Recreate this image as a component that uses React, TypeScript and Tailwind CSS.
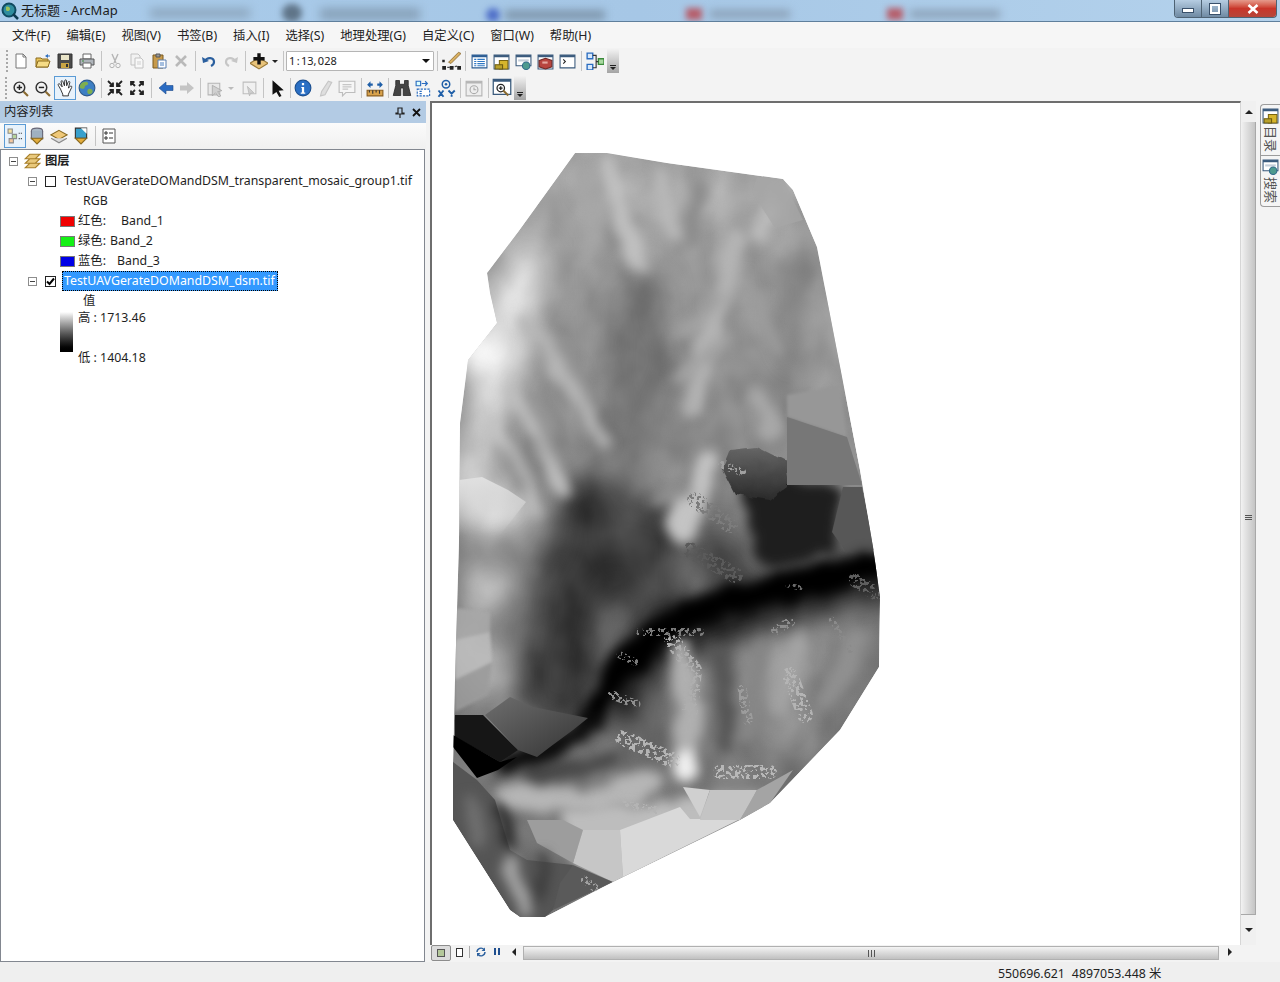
import React from 'react'

const I = ({ children, s = 16 }: { children: React.ReactNode; s?: number }) => (
  <svg width={s} height={s} viewBox="0 0 16 16" fill="none">{children}</svg>
)

const icons: Record<string, React.ReactNode> = {
  newDoc: <I><path d="M3 1h7l3 3v11H3z" fill="#fff" stroke="#777" /><path d="M10 1v3h3" stroke="#777" /></I>,
  open: <I><path d="M1 5h5l1 1h6v8H1z" fill="#e8c45a" stroke="#8a6a1e" /><path d="M1 14l2-6h12l-2 6z" fill="#f6dc86" stroke="#8a6a1e" /><path d="M10 3l3-2v1.5h2v1h-2V5z" fill="#2f6fc0" /></I>,
  save: <I><path d="M1 1h14v14H1z" fill="#4b4b4b" stroke="#333" /><path d="M4 2h8v5H4z" fill="#e9e4c8" /><path d="M4 10h8v5H4z" fill="#c9a545" /><path d="M9 11h2v3H9z" fill="#333" /></I>,
  print: <I><path d="M4 1h8v5H4z" fill="#fff" stroke="#666" /><path d="M1 6h14v6H1z" fill="#aeb4ba" stroke="#555" /><path d="M4 10h8v5H4z" fill="#fff" stroke="#666" /><path d="M3 8h2" stroke="#3a8a3a" /></I>,
  cut: <I><path d="M5 1l4 9M11 1L7 10" stroke="#b4b4b4" strokeWidth="1.4" /><circle cx="5" cy="12.5" r="2.2" stroke="#b4b4b4" /><circle cx="11" cy="12.5" r="2.2" stroke="#b4b4b4" /></I>,
  copy: <I><path d="M2 1h7l2 2v9H2z" fill="#f2f2f2" stroke="#c2c2c2" /><path d="M6 5h6l2 2v8H6z" fill="#f8f8f8" stroke="#c2c2c2" /><path d="M8 9h4M8 11h4" stroke="#cfcfcf" /></I>,
  paste: <I><path d="M2 2h10v13H2z" fill="#c79a4b" stroke="#7b5a20" /><path d="M5 1h4v3H5z" fill="#999" stroke="#555" /><path d="M7 7h8v8H7z" fill="#fff" stroke="#5a7fb0" /><path d="M9 10h4M9 12h4" stroke="#4a7fc0" /></I>,
  del: <I><path d="M3 3l10 10M13 3L3 13" stroke="#b9b9b9" strokeWidth="2.6" /></I>,
  undo: <I><path d="M4 8c2-4 9-4 9 1 0 2-1 3-3 4" stroke="#2a5f9e" strokeWidth="2.2" /><path d="M1 4l1 6 6-2z" fill="#2a5f9e" /></I>,
  redo: <I><path d="M12 8c-2-4-9-4-9 1 0 2 1 3 3 4" stroke="#c6c6c6" strokeWidth="2.2" /><path d="M15 4l-1 6-6-2z" fill="#c6c6c6" /></I>,
  add: <I s={18}><path d="M8 5l8 5-8 5-8-5z" fill="#e8c37a" stroke="#9a7a3a" /><path d="M6.5 1h3v3.5H13v3H9.500v3.500h-3v-3.500H3v-3h3.500z" fill="#111" /></I>,
  editor: <I s={20}><path d="M2 13l6 0 6-1" stroke="#444" strokeDasharray="2 1" /><path d="M1 12h3v3H1zM7 12h3v3H7zM13 12h3v3h-3zM1 7h2v2H1z" fill="#222" /><path d="M6 9l8-8 2 1-8 8z" fill="#d9b061" stroke="#80602a" strokeWidth=".6" /></I>,
  toc: <I s={17}><path d="M1 2h14v12H1z" fill="#fff" stroke="#2b5c93" /><path d="M1 2h14v2H1z" fill="#2b5c93" /><path d="M3 6h2M6 6h7M3 8h2M6 8h7M3 10h2M6 10h7M3 12h2M6 12h7" stroke="#2f78c4" /></I>,
  catalog: <I s={17}><path d="M1 2h14v13H1z" fill="#fff" stroke="#3a5a7c" /><path d="M1 2h14v2H1z" fill="#3a5a7c" /><path d="M6 7h8v8H6z" fill="#d6b52c" stroke="#7a6510" /><path d="M2 11h7v4H2z" fill="#b9a12a" stroke="#6d5c10" /></I>,
  searchWin: <I s={17}><path d="M1 2h14v10H1z" fill="#fff" stroke="#3a5a7c" /><path d="M1 2h14v2H1z" fill="#3a5a7c" /><path d="M3 6h10v2H3z" fill="#c4ced9" /><circle cx="10.500" cy="12" r="3.500" fill="#4d9a8e" stroke="#2f6a8a" /></I>,
  toolbox: <I s={17}><path d="M1 2h14v13H1z" fill="#fff" stroke="#3a5a7c" /><path d="M1 2h14v2H1z" fill="#3a5a7c" /><path d="M2 7l6-2 6 2v6l-6 2-6-2z" fill="#b8443f" stroke="#702724" /><path d="M5 8h5v2H5z" fill="#e6a7a0" /></I>,
  python: <I s={17}><path d="M1 2h14v12H1z" fill="#fff" stroke="#3a5a7c" /><path d="M1 2h14v2H1z" fill="#3a5a7c" /><path d="M4 6l2 2-2 2" stroke="#222" /></I>,
  model: <I s={18}><path d="M1 1h5v5H1zM1 11h5v5H1z" fill="#d8e8fa" stroke="#2a6cc0" strokeWidth="1.200" /><path d="M11 6h5v5h-5z" fill="#a9d8a0" stroke="#3a8a3a" strokeWidth="1.200" /><path d="M6 3h3v11H6M9 8.500h2" stroke="#333" /></I>,
  zoomIn: <I s={17}><circle cx="7" cy="7" r="5" fill="#f2f2f2" stroke="#333" strokeWidth="1.400" /><path d="M4.500 7h5M7 4.500v5" stroke="#222" strokeWidth="1.400" /><path d="M11 11l4 4" stroke="#8a6a30" strokeWidth="2" /></I>,
  zoomOut: <I s={17}><circle cx="7" cy="7" r="5" fill="#f2f2f2" stroke="#333" strokeWidth="1.400" /><path d="M4.500 7h5" stroke="#222" strokeWidth="1.400" /><path d="M11 11l4 4" stroke="#8a6a30" strokeWidth="2" /></I>,
  hand: <I s={18}><path d="M4 9L2 5.500c-.6-1 .8-1.800 1.500-.9L5.500 7 4.500 2.500c-.2-1.100 1.300-1.400 1.600-.3L7.500 6l.3-4.500c.1-1.100 1.500-1 1.500.1L9.500 6l1.300-3.300c.4-1 1.800-.5 1.500.5L11 8l1.800-1.500c.8-.6 1.700.3 1.100 1.100L11 13.500V15H6v-1.500z" fill="#fff" stroke="#222" strokeWidth=".8" /></I>,
  globe: <I s={18}><circle cx="8" cy="8" r="7" fill="#3d7fc4" stroke="#2d5a8c" /><path d="M4 3c2-1 5-1 5 1s-3 1-3 3-3 2-4 1 0-4 2-5zM9 9c2-1 4 0 4 2s-3 3-4 2 -1-3 0-4z" fill="#7fae4e" /></I>,
  zoomFixIn: <I><path d="M1 1l5 5M6 2.500V6H2.500M15 1l-5 5M10 2.500V6h3.500M1 15l5-5M6 13.500V10H2.500M15 15l-5-5M10 13.500V10h3.500" stroke="#222" strokeWidth="1.800" /></I>,
  zoomFixOut: <I><path d="M6 6L2 2M2 5.500V2h3.500M10 6l4-4M14 5.500V2h-3.500M6 10l-4 4M2 10.500V14h3.500M10 10l4 4M14 10.500V14h-3.500" stroke="#222" strokeWidth="1.800" /></I>,
  back: <I><path d="M1 8l7-6v3.500h7v5H8V14z" fill="#2a6bc2" stroke="#1c4a8a" strokeWidth=".6" /></I>,
  forward: <I><path d="M15 8L8 2v3.500H1v5h7V14z" fill="#c4c4c4" /></I>,
  selectF: <I s={17}><path d="M1 3h11v11H1z" fill="#e8e8e8" stroke="#b5b5b5" /><path d="M5 5l9 5-4 1 3 4-2 1-3-4-3 3z" fill="#d0d0d0" stroke="#a5a5a5" strokeWidth=".7" /></I>,
  clear: <I s={17}><path d="M2 2h12v11H2z" fill="#f0f0f0" stroke="#bdbdbd" /><path d="M6 6l6 6-3 .5-1 2.500z" fill="#cfcfcf" stroke="#b0b0b0" strokeWidth=".6" /></I>,
  pointer: <I s={18}><path d="M4 1l10 9-4.500.5L12 15l-2 1-2.500-4.500L4 14z" fill="#111" /></I>,
  info: <I s={18}><circle cx="8" cy="8" r="7" fill="#2a6fc4" stroke="#1b4f90" /><path d="M7 3.500h2v2H7zM6.500 7H9v5h1v1H6v-1h1V8h-.5z" fill="#fff" /></I>,
  link: <I s={18}><path d="M11 2l3 1-6 11-4 1 1-4z" fill="#dedede" stroke="#c6c6c6" /></I>,
  note: <I s={18}><path d="M1 2h14v10H7l-3 3v-3H1z" fill="#f6f6f6" stroke="#bdbdbd" /><path d="M4 5h8M4 7h8M4 9h5" stroke="#c6c6c6" /></I>,
  measure: <I s={18}><path d="M1 5l3-3v2h2v2H4v2zM15 5l-3-3v2h-2v2h2v2z" fill="#1f5fa8" /><path d="M1 10h14v5H1z" fill="#d9a24b" stroke="#8a5f20" /><path d="M3 10v2M6 10v3M9 10v2M12 10v3" stroke="#333" /></I>,
  binoc: <I s={20}><path d="M3 2h3v3h4V2h3v4l2 8h-6V8H7v6H1l2-8z" fill="#444" stroke="#222" strokeWidth=".6" /></I>,
  goto: <I s={18}><path d="M2 9h11v6H2z" fill="#fff" stroke="#2a6cc0" strokeDasharray="2 1" /><path d="M1 2h4v4H1z" fill="#dff" stroke="#2a6cc0" /><path d="M6 4h5M9 2l2 2-2 2" stroke="#2a6cc0" /><path d="M4 11h2M4 13h2" stroke="#2a6cc0" /></I>,
  xy: <I s={20}><circle cx="8" cy="5" r="3" stroke="#1f5fa8" strokeWidth="1.200" /><circle cx="8" cy="5" r="1" fill="#1f5fa8" /><path d="M2 10l4 5M6 10l-4 5M10 10l2.500 2.500L15 10M12.500 12.500V15" stroke="#1f5fa8" strokeWidth="1.500" /></I>,
  time: <I s={18}><path d="M1 2h14v13H1z" fill="#eee" stroke="#b5b5b5" /><path d="M1 2h14v2H1z" fill="#b5b5b5" /><circle cx="8" cy="9.500" r="3.500" stroke="#aaa" /><path d="M8 7.500v2h2" stroke="#aaa" /></I>,
  magnify: <I s={20}><path d="M1 1h14v12H1z" fill="#fff" stroke="#3a5a7c" /><path d="M1 1h14v2H1z" fill="#3a5a7c" /><circle cx="7" cy="8" r="3" stroke="#222" /><path d="M5.500 8h3M7 6.500v3" stroke="#222" /><path d="M9 10l4 4" stroke="#8a6a30" strokeWidth="1.600" /></I>,
  listDraw: <I s={17}><path d="M1 1h4v4H1z" fill="#f4e2a0" stroke="#8a8a8a" /><path d="M5 6h4v4H5z" fill="#b7d59c" stroke="#8a8a8a" /><path d="M2 10h4v4H2z" fill="#f4c8a0" stroke="#8a8a8a" /><path d="M11 5h3M11 10h3" stroke="#333" strokeDasharray="1 1" /></I>,
  listSource: <I s={18}><ellipse cx="8" cy="3.500" rx="5" ry="2.500" fill="#aab8c6" stroke="#667" /><path d="M3 3.500v7h10v-7" fill="#9fb0c0" stroke="#667" /><path d="M3 10h10L8 15z" fill="#e3ad3d" stroke="#8a6a20" /></I>,
  listVis: <I s={18}><path d="M8 3l7 4-7 4-7-4z" fill="#efc878" stroke="#8a6a20" /><path d="M1 10l7 4 7-4" stroke="#8a8a8a" fill="#ddd" /></I>,
  listSel: <I s={18}><path d="M3 1h10v9H3z" fill="#38a0cc" stroke="#333" /><path d="M8 1h5v5z" fill="#fff" /><path d="M3 10h10l-5 5z" fill="#e3ad3d" stroke="#8a6a20" /></I>,
  opts: <I><path d="M2 1h12v14H2z" fill="#fff" stroke="#555" /><path d="M4 4h2v2H4zM4 9h2v2H4z" stroke="#333" /><path d="M8 5h4M8 10h4" stroke="#333" /></I>,
  layers: <I s={18}><path d="M6 2h9l-4 4H2zM6 6h9l-4 4H2zM6 10h9l-4 4H2z" fill="#e9c97c" stroke="#a87f2a" /></I>,
}

const Slot = ({ name, w = 22, active }: { name: string; w?: number; active?: boolean }) => (
  <div className={`h-[24px] shrink-0 flex items-center justify-center ${active ? 'bg-[#e8f2fb] border border-[#5b9bd5]' : ''}`} style={{ width: w }}>
    {icons[name]}
  </div>
)

const Sep = ({ w = 6 }: { w?: number }) => (
  <div className="h-[20px] shrink-0 flex justify-center" style={{ width: w }}>
    <div className="w-px h-full bg-[#c4c4c4]" />
  </div>
)

const Caret = ({ w = 10, light }: { w?: number; light?: boolean }) => (
  <div className="h-[24px] shrink-0 flex items-center justify-center" style={{ width: w }}>
    <div className={`w-0 h-0 border-x-[3px] border-x-transparent border-t-[3px] ${light ? 'border-t-[#bbb]' : 'border-t-[#222]'}`} />
  </div>
)

const Grip = () => (
  <div className="w-[6px] shrink-0 flex flex-col gap-[2px] items-center">
    {[0, 1, 2, 3, 4, 5].map((i) => <div key={i} className="w-[2px] h-[2px] bg-[#a8a8a8]" />)}
  </div>
)

const Overflow = () => (
  <div className="w-[12px] h-[24px] ml-[1px] mt-[1px] self-start shrink-0 bg-gradient-to-b from-[#f2f2f2] to-[#a4a4a4] flex flex-col items-center justify-end pb-[3px] gap-[1px]">
    <div className="w-[6px] h-px bg-[#222]" />
    <div className="w-0 h-0 border-x-[3px] border-x-transparent border-t-[3px] border-t-[#222]" />
  </div>
)

const Expander = () => (
  <div className="w-[9px] h-[9px] shrink-0 border border-[#8d8d8d] bg-white flex items-center justify-center">
    <div className="w-[5px] h-px bg-[#444]" />
  </div>
)

const Check = ({ on }: { on?: boolean }) => (
  <div className="w-[11px] h-[11px] shrink-0 border border-[#222] bg-white flex items-center justify-center">
    {on && <svg width="9" height="9" viewBox="0 0 9 9"><path d="M1 4.500l2.500 2.500L8 1.500" stroke="#000" strokeWidth="2" fill="none" /></svg>}
  </div>
)

const BandRow = ({ color, label, gap, band }: { color: string; label: string; gap: string; band: string }) => (
  <div className="h-[20px] flex items-center pl-[59px]">
    <div className="w-[15px] h-[11px] border border-[#777]" style={{ background: color }} />
    <span className="ml-[3px]">{label}</span>
    <span className={gap}>{band}</span>
  </div>
)

const outline =
  '575,153 607,153 667,163 783,179 793,190 817,247 860,470 873,547 880,597 879,667 840,730 770,803 740,820 613,882 545,917 520,917 510,910 453,820 453,763 455,680 459,540 460,423 468,360 497,323 490,293 487,273 518,232'

const stroke = (d: string, c: string, w: number) => (
  <path key={d} d={d} stroke={c} strokeWidth={w} fill="none" strokeLinecap="round" strokeLinejoin="round" />
)

const RasterMap = () => (
  <svg className="block w-full h-full" viewBox="432 104 808 840">
    <defs>
      <clipPath id="dem"><polygon points={outline} /></clipPath>
      <linearGradient id="base" x1="0" y1="0" x2="0" y2="1">
        <stop offset="0" stopColor="#a8a8a8" />
        <stop offset=".4" stopColor="#888888" />
        <stop offset="1" stopColor="#707070" />
      </linearGradient>
      <linearGradient id="cap" x1="0" y1="0" x2="0" y2="1">
        <stop offset="0" stopColor="#666666" />
        <stop offset="1" stopColor="#2a2a2a" />
      </linearGradient>
      <linearGradient id="fade" x1="0" y1="0" x2="0" y2="1">
        <stop offset="0" stopColor="#e0e0e0" />
        <stop offset="1" stopColor="#e0e0e0" stopOpacity="0" />
      </linearGradient>
      <linearGradient id="wedge" x1="0" y1="0" x2="1" y2="1">
        <stop offset="0" stopColor="#6e6e6e" />
        <stop offset="1" stopColor="#333333" />
      </linearGradient>
      <filter id="wide" x="-20%" y="-20%" width="140%" height="140%" colorInterpolationFilters="sRGB">
        <feTurbulence type="fractalNoise" baseFrequency=".018" numOctaves="3" seed="7" result="n" />
        <feDisplacementMap in="SourceGraphic" in2="n" scale="34" xChannelSelector="R" yChannelSelector="G" />
        <feGaussianBlur stdDeviation="13" />
      </filter>
      <filter id="ridge" x="-20%" y="-20%" width="140%" height="140%" colorInterpolationFilters="sRGB">
        <feTurbulence type="fractalNoise" baseFrequency=".03" numOctaves="3" seed="11" result="n" />
        <feDisplacementMap in="SourceGraphic" in2="n" scale="20" xChannelSelector="R" yChannelSelector="G" />
        <feGaussianBlur stdDeviation="6" />
      </filter>
      <filter id="soft" x="-10%" y="-10%" width="120%" height="120%"><feGaussianBlur stdDeviation="1.500" /></filter>
      <filter id="mottle" x="0" y="0" width="100%" height="100%" colorInterpolationFilters="sRGB">
        <feTurbulence type="fractalNoise" baseFrequency=".03 .02" numOctaves="4" seed="9" />
        <feColorMatrix type="matrix" values="1.800 0 0 0 -.400  1.800 0 0 0 -.400  1.800 0 0 0 -.400  0 0 0 0 .1" />
        <feGaussianBlur stdDeviation="3" />
      </filter>
      <filter id="rough" x="-10%" y="-10%" width="120%" height="120%" colorInterpolationFilters="sRGB">
        <feTurbulence type="fractalNoise" baseFrequency=".09" numOctaves="2" seed="3" result="n" />
        <feDisplacementMap in="SourceGraphic" in2="n" scale="6" xChannelSelector="R" yChannelSelector="G" />
      </filter>
      <filter id="speck" x="-5%" y="-5%" width="110%" height="110%" colorInterpolationFilters="sRGB">
        <feTurbulence type="fractalNoise" baseFrequency=".28" numOctaves="2" seed="5" result="n" />
        <feColorMatrix in="n" type="matrix" values="0 0 0 0 0  0 0 0 0 0  0 0 0 0 0  24 0 0 0 -12.500" result="m" />
        <feComposite in="SourceGraphic" in2="m" operator="in" />
      </filter>
    </defs>
    <g clipPath="url(#dem)">
      <polygon points={outline} fill="url(#base)" />

      {/* broad relief */}
      <g filter="url(#wide)">
        {stroke('M600 180 L650 200 L760 210', '#b4b4b4', 40)}
        {stroke('M530 260 L510 320 L490 400', '#e2e2e2', 50)}
        {stroke('M465 350 L495 345', '#ffffff', 44)}
        {stroke('M480 440 L470 490', '#cdcdcd', 44)}
        {stroke('M475 520 L505 510', '#dcdcdc', 46)}
        {stroke('M478 590 L495 585', '#bcbcbc', 50)}
        {stroke('M470 650 L490 670', '#b4b4b4', 50)}
        {stroke('M640 300 L640 400 L615 470', '#747474', 62)}
        {stroke('M800 260 L800 340', '#868686', 28)}
        {stroke('M835 300 L840 380', '#a6a6a6', 30)}
        {stroke('M790 650 L780 720', '#989898', 60)}
        {stroke('M640 700 L650 750', '#606060', 46)}
        {stroke('M590 510 L575 600 L555 690', '#2e2e2e', 70)}
        {stroke('M640 530 L650 590', '#3c3c3c', 70)}
        {stroke('M710 555 L740 565', '#3c3c3c', 46)}
        {stroke('M880 570 L800 595 L730 610 L655 640 L620 690', '#161616', 50)}
      </g>

      <rect x="440" y="140" width="450" height="790" filter="url(#mottle)" />

      {/* fine ridges and gullies */}
      <g filter="url(#ridge)">
        {stroke('M610 165 L622 210 L640 262', '#c0c0c0', 18)}
        {stroke('M582 180 L592 240', '#a6a6a6', 16)}
        {stroke('M660 175 L672 230', '#b8b8b8', 16)}
        {stroke('M700 190 L690 235', '#8a8a8a', 18)}
        {stroke('M736 238 L728 275 L712 330 L692 410', '#b4b4b4', 20)}
        {stroke('M770 210 L758 235', '#bcbcbc', 18)}
        {stroke('M720 300 L680 335', '#a4a4a4', 10)}
        {stroke('M725 340 L680 380', '#a4a4a4', 10)}
        {stroke('M760 300 L775 350', '#9c9c9c', 14)}
        {stroke('M755 395 L770 430', '#a8a8a8', 22)}
        {stroke('M528 325 L572 385 L600 440', '#b6b6b6', 16)}
        {stroke('M510 392 L545 442 L565 488', '#bebebe', 16)}
        {stroke('M490 420 L515 468 L535 510', '#c4c4c4', 14)}
        {stroke('M560 345 L590 402', '#929292', 9)}
        {stroke('M530 400 L556 450', '#949494', 9)}
        {stroke('M500 450 L522 490', '#a2a2a2', 8)}
        {stroke('M708 465 L682 530', '#c4c4c4', 26)}
        {stroke('M650 500 L690 490', '#9a9a9a', 8)}
        {stroke('M682 650 L690 720 L686 770', '#b0b0b0', 24)}
        {stroke('M688 762 L686 772', '#f0f0f0', 22)}
        {stroke('M722 652 L726 745', '#545454', 16)}
        {stroke('M760 650 L745 730', '#868686', 22)}
        {stroke('M860 640 L825 700', '#909090', 20)}
        {stroke('M800 640 L780 710', '#a4a4a4', 16)}
        {stroke('M530 775 L610 760', '#484848', 18)}
        {stroke('M510 797 L600 802 L650 782', '#b6b6b6', 28)}
      </g>

      {/* dark basin and its sharp shoulder */}
      <polygon points="735,480 787,475 845,490 835,550 770,572 745,530" fill="#1e1e1e" filter="url(#ridge)" />
      <polygon points="722,470 730,450 757,447 787,462 787,487 770,500 735,495" fill="url(#cap)" filter="url(#rough)" />
      <polygon points="757,177 783,179 803,220 775,228 752,192" fill="#a6a6a6" opacity=".7" />
      <polygon points="787,395 840,385 847,437 787,417" fill="#979797" filter="url(#soft)" />
      <polygon points="787,417 847,437 862,485 787,485" fill="#777777" />
      <polygon points="843,487 862,487 875,550 846,552 832,532" fill="#575757" />

      {/* river */}
      <g filter="url(#ridge)">
        {stroke('M882 562 L800 585 L730 600 L655 632 L612 682 L592 720', '#000000', 28)}
        {stroke('M592 722 L545 752 L505 765', '#0d0d0d', 20)}
      </g>

      {/* flat facets */}
      <polygon points="560,812 760,790 770,803 740,820 613,882 573,865" fill="#bdbdbd" filter="url(#ridge)" />
      <polygon points="620,830 680,807 690,819 740,819 623,877" fill="#d9d9d9" />
      <polygon points="573,863 583,830 620,830 623,877 613,882" fill="#c6c6c6" />
      <polygon points="527,820 563,820 583,830 573,863 537,843" fill="#9d9d9d" />
      <polygon points="683,787 700,817 710,790" fill="#d0d0d0" />
      <polygon points="710,790 757,790 740,820 700,820" fill="#c4c4c4" />
      <polygon points="757,790 793,770 770,803 740,820" fill="#a4a4a4" />
      <polygon points="453,762 477,780 495,800 510,850 527,860 573,865 553,910 545,917 520,917 510,910 453,820" fill="#555555" />
      <polygon points="455,715 483,715 518,750 500,762 455,737" fill="#161616" />
      <polygon points="453,735 500,762 517,757 498,770 477,778 453,747" fill="#000000" />
      <polygon points="485,715 510,697 533,707 588,718 573,730 550,747 537,757 518,750" fill="url(#wedge)" />
      <polygon points="573,865 613,882 553,910 560,883" fill="#5a5a5a" />
      <g filter="url(#ridge)">
        {stroke('M497 807 L512 842', '#242424', 12)}
        {stroke('M510 865 L525 910', '#a4a4a4', 16)}
        {stroke('M470 800 L480 840', '#707070', 14)}
        {stroke('M545 860 L540 900', '#3e3e3e', 12)}
      </g>
      <polygon points="458,480 482,477 508,490 526,502 500,535 458,535" fill="url(#fade)" />
      <g filter="url(#soft)" opacity=".85">
        <polygon points="455,608 490,612 490,632 455,640" fill="#a8a8a8" />
        <polygon points="455,640 490,632 492,662 455,680" fill="#bcbcbc" />
        <polygon points="455,680 492,662 488,695 455,712" fill="#9c9c9c" />
      </g>

      {/* rough noisy patches */}
      <g filter="url(#speck)">
        {stroke('M623 738 L672 760', '#b4b4b4', 16)}
        {stroke('M672 640 L694 670 L690 710', '#aeaeae', 16)}
        {stroke('M790 675 L805 715', '#b4b4b4', 16)}
        {stroke('M720 772 L770 772', '#b8b8b8', 14)}
        {stroke('M640 632 L700 632', '#7c7c7c', 8)}
        {stroke('M776 630 L790 622', '#8c8c8c', 10)}
        {stroke('M855 580 L878 595', '#5e5e5e', 14)}
        {stroke('M625 805 L655 810', '#b4b4b4', 8)}
        {stroke('M612 695 L636 704', '#8e8e8e', 9)}
        {stroke('M620 655 L635 662', '#7a7a7a', 7)}
        {stroke('M788 585 L800 588', '#6a6a6a', 5)}
        {stroke('M690 550 L735 575', '#5a5a5a', 16)}
        {stroke('M722 465 L742 472', '#a0a0a0', 8)}
        {stroke('M695 500 L730 525', '#7c7c7c', 16)}
        {stroke('M585 880 L595 888', '#a0a0a0', 8)}
        {stroke('M742 690 L748 720', '#9c9c9c', 10)}
        {stroke('M832 620 L850 650', '#8a8a8a', 6)}
      </g>
    </g>
  </svg>
)

const Toolbar1 = () => (
  <div className="h-[26px] flex items-center pl-[4px]">
    <Grip />
    <Slot name="newDoc" /><Slot name="open" /><Slot name="save" /><Slot name="print" />
    <Sep />
    <Slot name="cut" /><Slot name="copy" /><Slot name="paste" /><Slot name="del" />
    <Sep />
    <Slot name="undo" /><Slot name="redo" />
    <Sep />
    <Slot name="add" /><Caret />
    <Sep />
    <div className="w-[148px] h-[20px] shrink-0 bg-white border border-[#b5b5b5] rounded-[1px] flex items-center pl-[2px] pr-[3px] text-[11px] justify-between">
      <span className="[word-spacing:-1.5px]">1 : 13, 028</span>
      <div className="w-0 h-0 border-x-[4px] border-x-transparent border-t-[4px] border-t-[#111]" />
    </div>
    <Sep />
    <Slot name="editor" />
    <Sep />
    <Slot name="toc" /><Slot name="catalog" /><Slot name="searchWin" /><Slot name="toolbox" /><Slot name="python" />
    <Sep />
    <Slot name="model" />
    <Overflow />
  </div>
)

const Toolbar2 = () => (
  <div className="h-[26px] mt-px flex items-center pl-[3px]">
    <Grip />
    <Slot name="zoomIn" /><Slot name="zoomOut" />
    <div className="w-px shrink-0" />
    <Slot name="hand" active /><Slot name="globe" />
    <Sep />
    <Slot name="zoomFixIn" /><Slot name="zoomFixOut" />
    <Sep w={7} />
    <Slot name="back" /><Slot name="forward" w={20} />
    <Sep w={7} />
    <Slot name="selectF" /><Caret light /><div className="w-[2px] shrink-0" /><Slot name="clear" />
    <Sep />
    <Slot name="pointer" />
    <Sep w={4} />
    <Slot name="info" /><Slot name="link" /><Slot name="note" />
    <Sep />
    <Slot name="measure" />
    <Sep w={5} />
    <Slot name="binoc" /><Slot name="goto" /><Slot name="xy" />
    <Sep />
    <Slot name="time" />
    <Sep />
    <Slot name="magnify" />
    <Overflow />
  </div>
)

const menus = ['文件(F)', '编辑(E)', '视图(V)', '书签(B)', '插入(I)', '选择(S)', '地理处理(G)', '自定义(C)', '窗口(W)', '帮助(H)']

export default function App() {
  return (
    <div className="w-[1280px] h-[982px] overflow-hidden flex flex-col bg-[#f3f3f3] text-[#222] text-[12.35px] font-['Noto_Sans','Noto_Sans_CJK_SC',sans-serif]">
      {/* title bar */}
      <div className="relative h-[22px] shrink-0 bg-gradient-to-r from-[#a9cbea] via-[#a6c7e6] to-[#b4d2ec] border-b border-[#5f7f9c] flex items-center overflow-hidden">
        <div className="absolute left-[150px] top-[8px] w-[100px] h-[10px] bg-[#8ea8c0] blur-[5px]" />
        <div className="absolute left-[282px] top-[4px] w-[20px] h-[18px] rounded-full bg-[#5f7488] blur-[3px]" />
        <div className="absolute left-[320px] top-[8px] w-[100px] h-[12px] bg-[#88a2ba] blur-[5px]" />
        <div className="absolute left-[486px] top-[8px] w-[14px] h-[14px] rounded-full bg-[#4f6fc8] blur-[3px]" />
        <div className="absolute left-[505px] top-[10px] w-[100px] h-[10px] bg-[#7f97ad] blur-[4px]" />
        <div className="absolute left-[686px] top-[8px] w-[16px] h-[12px] bg-[#b65d6a] blur-[3px]" />
        <div className="absolute left-[710px] top-[10px] w-[80px] h-[8px] bg-[#8aa0b6] blur-[4px]" />
        <div className="absolute left-[887px] top-[8px] w-[16px] h-[12px] bg-[#b65d6a] blur-[3px]" />
        <div className="absolute left-[910px] top-[10px] w-[90px] h-[8px] bg-[#8aa0b6] blur-[4px]" />
        <div className="relative ml-[1px] w-[18px] h-[18px] shrink-0">
          <svg width="18" height="18" viewBox="0 0 18 18">
            <circle cx="8" cy="8" r="6.500" fill="#2f8d9e" stroke="#0f4a60" strokeWidth="2" />
            <path d="M5 5c2-1 4 0 4 2s-3 3-4 1z" fill="#9ac25a" />
            <path d="M12 12l5 5" stroke="#0f3b50" strokeWidth="2.500" />
          </svg>
        </div>
        <span className="relative ml-[2px] text-[13px] text-[#1c1c1c]">无标题 - ArcMap</span>
        <div className="relative ml-auto mr-[3px] self-start h-[18px] flex border border-t-0 border-[#4e6273] rounded-b-[4px] overflow-hidden">
          <div className="w-[27px] bg-gradient-to-b from-[#b6cde2] to-[#6f8aa3] flex items-center justify-center border-r border-[#4e6273]">
            <div className="w-[12px] h-[5px] bg-white border border-[#39506a] mt-[3px]" />
          </div>
          <div className="w-[27px] bg-gradient-to-b from-[#b6cde2] to-[#6f8aa3] flex items-center justify-center border-r border-[#4e6273]">
            <div className="w-[10px] h-[10px] bg-transparent border-2 border-white outline outline-1 outline-[#39506a]" />
          </div>
          <div className="w-[47px] bg-gradient-to-b from-[#e59a8c] via-[#c9352a] to-[#b5453a] flex items-center justify-center">
            <svg width="12" height="10" viewBox="0 0 12 10"><path d="M1.500 1l9 8M10.500 1l-9 8" stroke="#fff" strokeWidth="2.600" /></svg>
          </div>
        </div>
      </div>

      {/* menu */}
      <div className="h-[26px] shrink-0 flex items-center gap-[16px] pl-[12px] pt-[2px] bg-[#f6f6f6]">
        {menus.map((m) => <span key={m}>{m}</span>)}
      </div>

      <Toolbar1 />
      <Toolbar2 />

      {/* body */}
      <div className="flex-1 min-h-0 flex">
        <div className="w-[426px] shrink-0 flex flex-col">
          <div className="h-[22px] shrink-0 bg-[#b3cbe4] flex items-center pl-[4px] pr-[4px]">
            <span>内容列表</span>
            <svg className="ml-auto" width="10" height="11" viewBox="0 0 10 11"><path d="M3 1h4v5h2v1H1V6h2zM5 7v4" stroke="#222" strokeWidth="1.200" fill="none" /></svg>
            <svg className="ml-[7px] mr-[1px]" width="9" height="9" viewBox="0 0 9 9"><path d="M1 1l7 7M8 1L1 8" stroke="#111" strokeWidth="1.800" /></svg>
          </div>
          <div className="h-[26px] shrink-0 bg-gradient-to-b from-[#fbfbfb] to-[#f0f0f0] flex items-center pl-[4px]">
            <Slot name="listDraw" active />
            <Slot name="listSource" /><Slot name="listVis" /><Slot name="listSel" />
            <Sep />
            <Slot name="opts" />
          </div>
          <div className="flex-1 min-h-0 w-[425px] bg-white border border-[#828790] pt-px text-[#1e1e1e]">
            <div className="h-[20px] flex items-center pl-[8px]">
              <Expander />
              <div className="ml-[5px]">{icons.layers}</div>
              <span className="ml-[4px] font-bold">图层</span>
            </div>
            <div className="h-[20px] flex items-center pl-[27px]">
              <Expander />
              <div className="ml-[8px]"><Check /></div>
              <span className="ml-[8px]">TestUAVGerateDOMandDSM_transparent_mosaic_group1.tif</span>
            </div>
            <div className="h-[20px] flex items-center pl-[82px]">RGB</div>
            <BandRow color="#f00000" label="红色:" gap="ml-[15px]" band="Band_1" />
            <BandRow color="#14f014" label="绿色:" gap="ml-[4px]" band="Band_2" />
            <BandRow color="#0000e6" label="蓝色:" gap="ml-[11px]" band="Band_3" />
            <div className="h-[20px] flex items-center pl-[27px]">
              <Expander />
              <div className="ml-[8px]"><Check on /></div>
              <span className="ml-[6px] w-[216px] h-[20px] bg-[#3399ff] text-white border border-dotted border-black pl-[1px] leading-[18px] whitespace-nowrap">TestUAVGerateDOMandDSM_dsm.tif</span>
            </div>
            <div className="h-[20px] flex items-center pl-[82px]">值</div>
            <div className="flex pl-[59px]">
              <div className="w-[13px] h-[40px] mt-px bg-gradient-to-b from-[#ffffff] to-[#000000]" />
              <div className="ml-[5px] flex flex-col">
                <span className="h-[14px] leading-[14px]">高 : 1713.46</span>
                <span className="h-[14px] leading-[14px] mt-[26px]">低 : 1404.18</span>
              </div>
            </div>
          </div>
        </div>

        <div className="w-[4px] shrink-0" />

        <div className="flex-1 min-w-0 flex flex-col">
          <div className="flex-1 min-h-0 flex">
            <div className="w-[811px] shrink-0 bg-white border-l-2 border-t-2 border-[#6e6e6e] border-r border-r-[#d6d6d6]">
              <RasterMap />
            </div>
            {/* vertical scrollbar */}
            <div className="w-[15px] shrink-0 flex flex-col items-center bg-[#f0f0f0]">
              <div className="h-[21px] w-full flex items-center justify-center">
                <div className="w-0 h-0 border-x-[4px] border-x-transparent border-b-[4px] border-b-[#222]" />
              </div>
              <div className="w-full h-[391px] bg-gradient-to-r from-[#f2f2f2] to-[#c4c4c4] border-r border-[#a8a8a8]" />
              <div className="w-full h-[8px] bg-gradient-to-r from-[#f2f2f2] to-[#c4c4c4] border-r border-[#a8a8a8] flex flex-col items-center justify-center gap-px">
                <div className="w-[7px] h-px bg-[#555]" />
                <div className="w-[7px] h-px bg-[#555]" />
                <div className="w-[7px] h-px bg-[#555]" />
              </div>
              <div className="w-full h-[394px] bg-gradient-to-r from-[#f2f2f2] to-[#c4c4c4] border-r border-b border-[#a8a8a8]" />
              <div className="flex-1 flex items-center justify-center">
                <div className="w-0 h-0 border-x-[4px] border-x-transparent border-t-[4px] border-t-[#222]" />
              </div>
            </div>
            {/* side tabs */}
            <div className="flex-1 min-w-0 pl-[4px] pt-[3px] flex flex-col">
              <div className="h-[52px] bg-[#f5f5f5] border border-r-0 border-[#9c9c9c] rounded-tl-[4px] flex flex-col items-center pt-[2px]">
                {icons.catalog}
                <span className="mt-[2px] text-[13px] leading-[15px] text-[#555] [writing-mode:vertical-rl] [text-orientation:sideways]">目录</span>
              </div>
              <div className="h-[52px] -mt-px bg-[#f5f5f5] border border-r-0 border-[#9c9c9c] rounded-bl-[4px] flex flex-col items-center pt-[2px]">
                {icons.searchWin}
                <span className="mt-[2px] text-[13px] leading-[15px] text-[#555] [writing-mode:vertical-rl] [text-orientation:sideways]">搜索</span>
              </div>
            </div>
          </div>
          {/* bottom strip */}
          <div className="h-[17px] shrink-0 flex items-start">
            <div className="w-[20px] h-[16px] ml-[1px] shrink-0 bg-[#dcdcdc] border border-[#8c8c8c] rounded-[2px] flex items-center justify-center">
              <div className="w-[8px] h-[8px] bg-[#b4c89a] border border-[#555]" />
            </div>
            <div className="w-[16px] h-[14px] shrink-0 flex items-center justify-center">
              <div className="w-[7px] h-[9px] bg-white border border-[#333]" />
            </div>
            <div className="w-px h-[12px] mt-px bg-[#aaa] ml-[2px] mr-[6px]" />
            <svg className="shrink-0 mt-[2px]" width="10" height="10" viewBox="0 0 10 10"><path d="M1 5a4 4 0 0 1 7-2.500M9 5a4 4 0 0 1-7 2.500" stroke="#2a5f9e" strokeWidth="1.400" fill="none" /><path d="M9 .500V4H5.500M1 9.500V6h3.500" fill="#2a5f9e" /></svg>
            <div className="ml-[8px] mt-[3px] flex gap-[2px] shrink-0">
              <div className="w-[2px] h-[7px] bg-[#1f4f8f]" />
              <div className="w-[2px] h-[7px] bg-[#1f4f8f]" />
            </div>
            <div className="ml-[12px] mt-[3px] w-0 h-0 shrink-0 border-y-[4px] border-y-transparent border-r-[4px] border-r-[#222]" />
            <div className="ml-[7px] mt-px w-[696px] h-[14px] shrink-0 bg-gradient-to-b from-[#f4f4f4] to-[#c0c0c0] border border-[#b0b0b0] flex items-center justify-center gap-px">
              <div className="w-px h-[7px] bg-[#555]" />
              <div className="w-px h-[7px] bg-[#555] mx-px" />
              <div className="w-px h-[7px] bg-[#555]" />
            </div>
            <div className="ml-[9px] mt-[3px] w-0 h-0 shrink-0 border-y-[4px] border-y-transparent border-l-[4px] border-l-[#222]" />
          </div>
        </div>
      </div>

      {/* status bar */}
      <div className="h-[20px] shrink-0 bg-[#efefef] flex items-center pl-[998px] pt-[4px] text-[#222]">
        <span>550696.621</span>
        <span className="ml-[7px]">4897053.448 米</span>
      </div>
    </div>
  )
}
